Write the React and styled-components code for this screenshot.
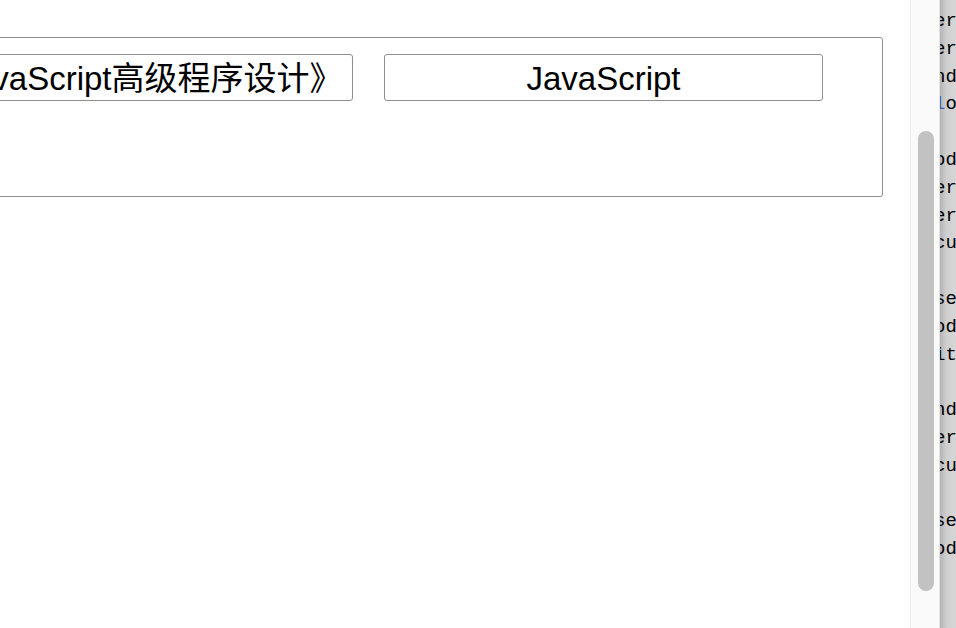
import React from "react";
import styled, { createGlobalStyle } from "styled-components";

const Global = createGlobalStyle`
  html, body { margin: 0; padding: 0; background: #fff; }
  body { font-family: "Liberation Sans", "Noto Sans CJK SC", sans-serif; }
  * { box-sizing: border-box; }
`;

const Page = styled.div`
  display: flex;
  width: 956px;
  height: 628px;
  overflow: hidden;
`;

const Viewport = styled.div`
  flex: 1;
  overflow: hidden;
  padding-top: 37px;
`;

const Box = styled.div`
  margin-left: -103px;
  width: 986px;
  height: 160px;
  border: 1px solid #8e8e8e;
  border-radius: 3px;
  padding: 16px;
  display: flex;
  align-items: flex-start;
  gap: 31px;
`;

const Choice = styled.button`
  flex: none;
  width: 439px;
  height: 47px;
  border: 1px solid #8e8e8e;
  border-radius: 3px;
  background: #fff;
  color: #000;
  padding: 2px 0 0;
  font-family: "Liberation Sans", "Noto Sans CJK SC", sans-serif;
  font-size: 33px;
  line-height: 43px;
  text-align: center;
  white-space: nowrap;
  overflow: hidden;
`;

const Track = styled.div`
  flex: none;
  width: 30px;
  height: 100%;
  background: #fafafa;
  border-left: 1px solid #ececec;
  border-right: 1px solid #e2e2e2;
  padding: 131px 5px 0 7px;
`;

const Thumb = styled.div`
  width: 16px;
  height: 460px;
  border-radius: 8px;
  background: #c2c2c2;
`;

const CodePanel = styled.div`
  flex: none;
  width: 16px;
  height: 100%;
  overflow: hidden;
  background: linear-gradient(to right, #b4b4b4, #cfcfcf 40%, #d6d6d6);
  padding-top: 8px;
`;

const CodeLine = styled.div`
  margin-left: -6px;
  height: 27.8px;
  line-height: 27.8px;
  font-family: "Liberation Mono", monospace;
  font-size: 19px;
  color: #000;
  white-space: pre;
`;

const Keyword = styled.span`
  color: #3a5fb0;
`;

const lines = [
  "er", "er", "nd", null, "", "od", "er", "er", "cu", "",
  "se", "od", "it", "", "nd", "er", "cu", "", "se", "od",
];

export default function App() {
  return (
    <>
      <Global />
      <Page>
        <Viewport>
          <Box>
            <Choice>《JavaScript高级程序设计》</Choice>
            <Choice>JavaScript</Choice>
          </Box>
        </Viewport>
        <Track>
          <Thumb />
        </Track>
        <CodePanel>
          {lines.map((l, i) => (
            <CodeLine key={i}>
              {l === null ? (
                <>
                  <Keyword>l</Keyword>o
                </>
              ) : (
                l || " "
              )}
            </CodeLine>
          ))}
        </CodePanel>
      </Page>
    </>
  );
}
